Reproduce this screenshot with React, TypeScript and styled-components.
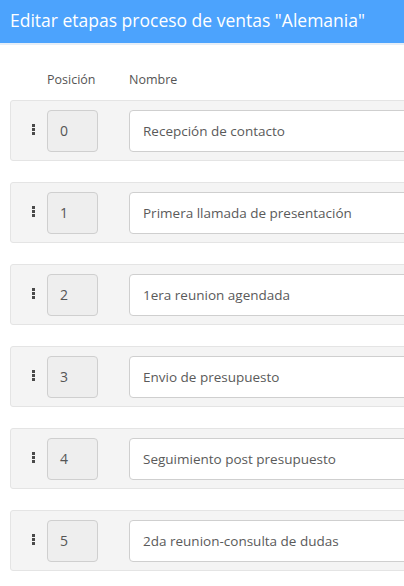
import styled, { createGlobalStyle } from "styled-components";

const GlobalStyle = createGlobalStyle`
  html, body {
    margin: 0;
    padding: 0;
    background: #ffffff;
    overflow: hidden;
  }
  body {
    font-family: "Open Sans", "Noto Sans", sans-serif;
  }
`;

const Page = styled.div`
  width: 404px;
  height: 586px;
  overflow: hidden;
  background: #ffffff;
`;

const Header = styled.div`
  height: 45px;
  background: #4ca3fd;
  border-bottom: 2px solid #e6eef7;
  display: flex;
  align-items: center;
  padding: 0 0 4px 10px;
  box-sizing: border-box;
  color: #ffffff;
  font-size: 17.5px;
  white-space: nowrap;
`;

const Body = styled.div`
  padding: 26px 0 0 10px;
`;

const ColumnLabels = styled.div`
  display: flex;
  height: 29px;
  align-items: flex-start;
  font-size: 12.5px;
  color: #555555;
`;

const Label = styled.span<{ $width: number }>`
  width: ${(p) => p.$width}px;
`;

const List = styled.div`
  display: flex;
  flex-direction: column;
  gap: 21px;
`;

const Row = styled.div`
  height: 61px;
  box-sizing: border-box;
  width: 420px;
  background: #f4f4f4;
  border: 1px solid #e4e4e4;
  border-radius: 3px;
  display: flex;
  align-items: center;
  padding-left: 21px;
`;

const Handle = styled.div`
  display: flex;
  flex-direction: column;
  gap: 1px;
  width: 15px;
  margin-top: -2px;
  span {
    width: 3px;
    height: 3px;
    background: #4a4a4a;
  }
`;

const PositionBox = styled.div`
  width: 51px;
  height: 42px;
  box-sizing: border-box;
  background: #eeeeee;
  border: 1px solid #cfcfcf;
  border-radius: 4px;
  display: flex;
  align-items: center;
  padding-left: 12px;
  font-size: 14px;
  color: #555555;
  margin-right: 31px;
`;

const NameInput = styled.div`
  flex: 1;
  height: 42px;
  box-sizing: border-box;
  background: #ffffff;
  border: 1px solid #cfcfcf;
  border-radius: 4px;
  display: flex;
  align-items: center;
  padding-left: 13px;
  font-size: 13.5px;
  color: #5a5a5a;
  white-space: nowrap;
`;

const stages = [
  "Recepción de contacto",
  "Primera llamada de presentación",
  "1era reunion agendada",
  "Envio de presupuesto",
  "Seguimiento post presupuesto",
  "2da reunion-consulta de dudas",
];

const App = () => {
  return (
    <Page>
      <GlobalStyle />
      <Header>Editar etapas proceso de ventas "Alemania"</Header>
      <Body>
        <ColumnLabels>
          <Label $width={37} />
          <Label $width={82}>Posición</Label>
          <Label $width={100}>Nombre</Label>
        </ColumnLabels>
        <List>
          {stages.map((name, i) => (
            <Row key={i}>
              <Handle>
                <span />
                <span />
                <span />
              </Handle>
              <PositionBox>{i}</PositionBox>
              <NameInput>{name}</NameInput>
            </Row>
          ))}
        </List>
      </Body>
    </Page>
  );
};

export default App;
